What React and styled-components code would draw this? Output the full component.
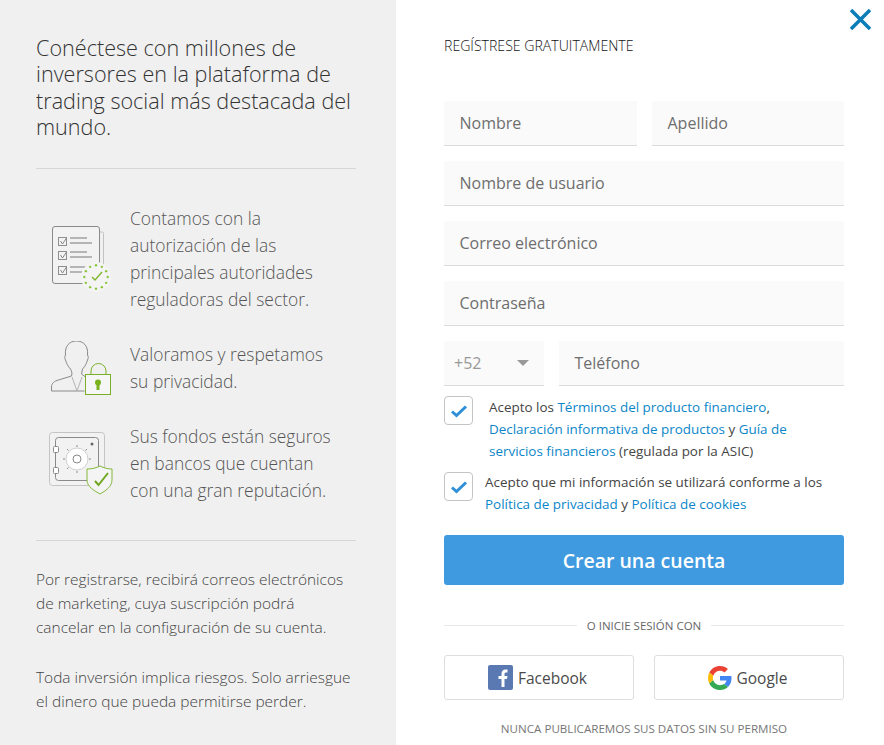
import React from "react"
import styled, { createGlobalStyle } from "styled-components"

const GlobalStyle = createGlobalStyle`
    html, body {
        margin: 0;
        padding: 0;
        background: #fff;
        font-family: "Open Sans", "Liberation Sans", sans-serif;
    }
    * { box-sizing: border-box; }
`

const Page = styled.div`
    position: relative;
    display: flex;
    width: 884px;
    height: 745px;
    overflow: hidden;
`

const Side = styled.aside`
    width: 396px;
    flex: none;
    background: #f0f0f0;
    padding: 35px 40px 0 36px;
`

const Headline = styled.h2`
    margin: 0;
    font-size: 21.600px;
    line-height: 26.300px;
    font-weight: 300;
    color: #333;
    padding-bottom: 28px;
    border-bottom: 1px solid #d6d6d6;
`

const Features = styled.div`
    padding: 36px 0 35.500px;
    display: flex;
    flex-direction: column;
    gap: 28px;
    border-bottom: 1px solid #d6d6d6;
`

const Feature = styled.div`
    display: flex;
    align-items: center;
`

const FeatureIcon = styled.div`
    width: 94px;
    flex: none;
    svg { display: block; }
`

const FeatureText = styled.p`
    margin: 0;
    font-size: 17.400px;
    line-height: 27px;
    font-weight: 300;
    color: #555;
`

const Fine = styled.p`
    margin: 0;
    font-size: 15.450px;
    line-height: 24px;
    font-weight: 300;
    color: #444;
    padding-top: ${(p) => p.$top}px;
`

const Main = styled.main`
    flex: 1;
    padding: 37px 40px 0 48px;
`

const Title = styled.h1`
    margin: 0 0 46px;
    font-size: 14.100px;
    line-height: 18px;
    font-weight: 300;
    text-transform: uppercase;
    color: #111;
`

const Fields = styled.div`
    display: flex;
    flex-direction: column;
    gap: 15px;
`

const Row = styled.div`
    display: flex;
    gap: 15px;
`

const Field = styled.div`
    flex: ${(p) => (p.$width ? `0 0 ${p.$width}px` : "1 0 auto")};
    height: 45px;
    background: #fafafa;
    border-bottom: 1px solid #dcdcdc;
    padding: 0 15px 0 15.500px;
    display: flex;
    align-items: center;
    font-size: 16px;
    color: #6e6e6e;
`

const Prefix = styled(Field)`
    padding: 0 15px 0 10px;
    justify-content: space-between;
    color: #999;
`

const Caret = styled.span`
    width: 0;
    height: 0;
    border-left: 6px solid transparent;
    border-right: 6px solid transparent;
    border-top: 6px solid #999;
`

const Consent = styled.label`
    display: flex;
    align-items: flex-start;
    margin-top: ${(p) => p.$top}px;
`

const Box = styled.span`
    flex: none;
    width: 29px;
    height: 29px;
    border: 1px solid #c4c4c4;
    border-radius: 4px;
    background: #fff;
    display: flex;
    align-items: center;
    justify-content: center;
    margin-right: ${(p) => p.$gap}px;
`

const ConsentText = styled.span`
    font-size: 13.450px;
    line-height: 22px;
    color: #444;
    margin-top: ${(p) => p.$top}px;
    a {
        color: #0b86c9;
        text-decoration: none;
    }
`

const Submit = styled.button`
    display: block;
    width: 100%;
    height: 50px;
    margin-top: 20px;
    border: 0;
    border-radius: 3px;
    background: #3f9ae0;
    color: #fff;
    font-family: inherit;
    font-size: 19.500px;
    font-weight: 600;
`

const OrLine = styled.div`
    display: flex;
    align-items: center;
    gap: 10px;
    height: 20px;
    margin-top: 30px;
    font-size: 11.500px;
    text-transform: uppercase;
    color: #666;
    &::before, &::after {
        content: "";
        flex: 1;
        height: 1px;
        background: #e8e8e8;
    }
`

const Socials = styled.div`
    display: flex;
    gap: 20px;
    margin-top: 20px;
`

const Social = styled.button`
    flex: 1;
    height: 45px;
    background: #fff;
    border: 1px solid #dedede;
    border-radius: 3px;
    display: flex;
    align-items: center;
    justify-content: center;
    gap: 5px;
    font-family: inherit;
    font-size: 15.500px;
    color: #4a4a4a;
    padding: 0 3px 0 0;
`

const Note = styled.p`
    margin: 20px 0 0;
    text-align: center;
    font-size: 11.600px;
    line-height: 18px;
    text-transform: uppercase;
    color: #777;
`

const Close = styled.button`
    position: absolute;
    top: 9px;
    right: 13px;
    width: 21px;
    height: 21px;
    padding: 0;
    border: 0;
    background: none;
    svg { display: block; }
`

const Check = () => (
    <svg width="18" height="14" viewBox="0 0 18 14">
        <path d="M2 7.500 L6.500 11.500 L16 2.500" fill="none" stroke="#2f90d8" strokeWidth="3" />
    </svg>
)

// icons are drawn in page coordinates, the viewBox starts at the icon column
const ChecklistIcon = () => {
    const dots = Array.from({ length: 12 }, (_, i) => {
        const a = (i * Math.PI) / 6
        return <circle key={i} cx={96 + 11.700 * Math.cos(a)} cy={277 + 11.700 * Math.sin(a)} r="1.200" fill="#8cc63f" />
    })
    return (
        <svg width="94" height="108" viewBox="36 205 94 108">
            <path d="M100 232 h2 a1.500 1.500 0 0 1 1.500 1.500 v32" fill="none" stroke="#c2c2c2" strokeWidth="1" />
            <rect x="52.500" y="226.500" width="47" height="57" rx="2.500" fill="#f2f2f2" stroke="#8a8a8a" strokeWidth="1" />
            {[237, 251, 266].map((y) => (
                <g key={y}>
                    <rect x="58.500" y={y + 0.5} width="8" height="8" fill="none" stroke="#8f8f8f" strokeWidth="1" />
                    <path d={`M60.500 ${y + 4} l2 3 l4 -6`} fill="none" stroke="#8a8a8a" strokeWidth="1" />
                    <rect x="70" y={y} width="17" height="2" fill="#b5b5b5" />
                    <rect x="70" y={y + 5} width={y === 266 ? 12 : 22} height="2" fill="#b5b5b5" />
                </g>
            ))}
            <circle cx="96" cy="277" r="15" fill="#f4f4f4" />
            {dots}
            <path d="M92 277 l3 3 l7 -8" fill="none" stroke="#7db52a" strokeWidth="1.300" />
        </svg>
    )
}

const PersonIcon = () => (
    <svg width="94" height="54" viewBox="36 342 94 54">
        <path d="M51.500 392 v-4 c0 -4 3 -6 7 -7 l13 -4 c1 -3 0 -5 -1 -7 c-3 -3 -4 -6 -5 -9 c-1 -2 -1 -3 0 -5 c-1 -9 4 -14 11 -14 c7 0 12 5 11 14 c1 2 1 3 0 5 c-1 3 -2 6 -5 9 l-1 5 l4 3" fill="none" stroke="#8a8a8a" strokeWidth="1" />
        <path d="M51.500 392 h33" fill="none" stroke="#8a8a8a" strokeWidth="1" />
        <path d="M72 378 l5 14 l5 -14" fill="none" stroke="#b5b5b5" strokeWidth="1" />
        <path d="M91 375 v-3 a7.500 7.500 0 0 1 15 0 v3" fill="none" stroke="#79b02a" strokeWidth="1" />
        <rect x="85.500" y="375.500" width="25" height="20" fill="#f6f6f6" stroke="#79b02a" strokeWidth="1" />
        <circle cx="98" cy="383.500" r="3" fill="#7ab11f" />
        <rect x="96.500" y="384" width="3" height="7" fill="#7ab11f" />
    </svg>
)

const SafeIcon = () => (
    <svg width="94" height="81" viewBox="36 424 94 81">
        <rect x="49.500" y="433.500" width="55" height="53" rx="3" fill="#f2f2f2" stroke="#c4c4c4" strokeWidth="1" />
        <rect x="55.500" y="438.500" width="43" height="43" rx="3" fill="none" stroke="#8a8a8a" strokeWidth="1" />
        <rect x="53.500" y="447.500" width="5" height="6" rx="1" fill="#fff" stroke="#8a8a8a" />
        <rect x="53.500" y="468.500" width="5" height="6" rx="1" fill="#fff" stroke="#8a8a8a" />
        <circle cx="77" cy="460" r="11" fill="#fff" stroke="#d0d0d0" />
        <circle cx="77" cy="460" r="4" fill="none" stroke="#8a8a8a" strokeWidth="1" />
        <path d="M77 446 v2 M77 472 v2 M63 460 h2 M89 460 h2 M67 450 l1.500 1.500 M87 450 l-1.500 1.500 M67 470 l1.500 -1.500" stroke="#8a8a8a" />
        <circle cx="92" cy="445" r="1.500" fill="#666" />
        <path d="M100 467 c4 2 8 3 12 3 v11 c0 7 -7 11 -12 14 c-5 -3 -13 -7 -13 -14 v-11 c5 0 9 -1 13 -3z" fill="#f4f4f4" stroke="#82b83a" strokeWidth="1" />
        <path d="M95 482 l3.500 4 l9.500 -12" fill="none" stroke="#6fa81e" strokeWidth="2" />
    </svg>
)

const FacebookIcon = () => (
    <svg width="25" height="25" viewBox="0 0 25 25">
        <rect width="25" height="25" rx="2" fill="#5a79b2" />
        <path d="M13.500 22 v-8 h-3 v-3 h3 v-2 c0 -3 1.500 -4.500 4 -4.500 h2 v3 h-1.500 c-1 0 -1.500 .5 -1.500 1.500 v2 h3 l-.5 3 h-2.500 v8z" fill="#fff" />
    </svg>
)

const GoogleIcon = () => (
    <svg width="24" height="24" viewBox="0 0 48 48">
        <path fill="#EA4335" d="M24 9.500c3.500 0 6.700 1.300 9.100 3.500l6.800-6.800C35.800 2.400 30.300 0 24 0 14.600 0 6.500 5.400 2.600 13.200l7.900 6.200C12.400 13.700 17.700 9.500 24 9.500z" />
        <path fill="#4285F4" d="M47 24.500c0-1.600-.1-3.100-.4-4.500H24v9h13c-.6 3-2.200 5.500-4.800 7.200l7.700 6C44.400 37.900 47 31.800 47 24.500z" />
        <path fill="#FBBC05" d="M10.500 28.600c-.5-1.400-.8-3-.8-4.600s.3-3.200.8-4.600l-7.900-6.200C.9 16.500 0 20.100 0 24s.9 7.500 2.600 10.800l7.900-6.200z" />
        <path fill="#34A853" d="M24 48c6.500 0 11.900-2.100 15.900-5.800l-7.700-6c-2.200 1.500-4.900 2.300-8.200 2.300-6.300 0-11.600-4.200-13.500-9.900l-7.900 6.200C6.500 42.600 14.600 48 24 48z" />
    </svg>
)

const App = () => (
    <>
        <GlobalStyle />
        <Page>
            <Side>
                <Headline>
                    Conéctese con millones de<br />inversores en la plataforma de<br />trading social más destacada del<br />mundo.
                </Headline>
                <Features>
                    <Feature>
                        <FeatureIcon><ChecklistIcon /></FeatureIcon>
                        <FeatureText>Contamos con la<br />autorización de las<br />principales autoridades<br />reguladoras del sector.</FeatureText>
                    </Feature>
                    <Feature>
                        <FeatureIcon><PersonIcon /></FeatureIcon>
                        <FeatureText>Valoramos y respetamos<br />su privacidad.</FeatureText>
                    </Feature>
                    <Feature>
                        <FeatureIcon><SafeIcon /></FeatureIcon>
                        <FeatureText>Sus fondos están seguros<br />en bancos que cuentan<br />con una gran reputación.</FeatureText>
                    </Feature>
                </Features>
                <Fine $top={26}>Por registrarse, recibirá correos electrónicos<br />de marketing, cuya suscripción podrá<br />cancelar en la configuración de su cuenta.</Fine>
                <Fine $top={26}>Toda inversión implica riesgos. Solo arriesgue<br />el dinero que pueda permitirse perder.</Fine>
            </Side>
            <Main>
                <Title>Regístrese gratuitamente</Title>
                <Fields>
                    <Row>
                        <Field $width={193}>Nombre</Field>
                        <Field>Apellido</Field>
                    </Row>
                    <Field>Nombre de usuario</Field>
                    <Field>Correo electrónico</Field>
                    <Field>Contraseña</Field>
                    <Row>
                        <Prefix $width={100}>+52<Caret /></Prefix>
                        <Field>Teléfono</Field>
                    </Row>
                </Fields>
                <Consent $top={10}>
                    <Box $gap={16}><Check /></Box>
                    <ConsentText $top={0}>
                        Acepto los <a href="#t">Términos del producto financiero</a>,<br />
                        <a href="#d">Declaración informativa de productos</a> y <a href="#g">Guía de</a><br />
                        <a href="#g">servicios financieros</a> (regulada por la ASIC)
                    </ConsentText>
                </Consent>
                <Consent $top={10}>
                    <Box $gap={12}><Check /></Box>
                    <ConsentText $top={-1}>
                        Acepto que mi información se utilizará conforme a los<br />
                        <a href="#p">Política de privacidad</a> y <a href="#c">Política de cookies</a>
                    </ConsentText>
                </Consent>
                <Submit>Crear una cuenta</Submit>
                <OrLine>O inicie sesión con</OrLine>
                <Socials>
                    <Social><FacebookIcon />Facebook</Social>
                    <Social><GoogleIcon />Google</Social>
                </Socials>
                <Note>Nunca publicaremos sus datos sin su permiso</Note>
            </Main>
            <Close aria-label="Cerrar">
                <svg width="21" height="21" viewBox="0 0 21 21">
                    <path d="M1 1 L20 20 M20 1 L1 20" stroke="#0a7db8" strokeWidth="3.500" />
                </svg>
            </Close>
        </Page>
    </>
)

export default App
